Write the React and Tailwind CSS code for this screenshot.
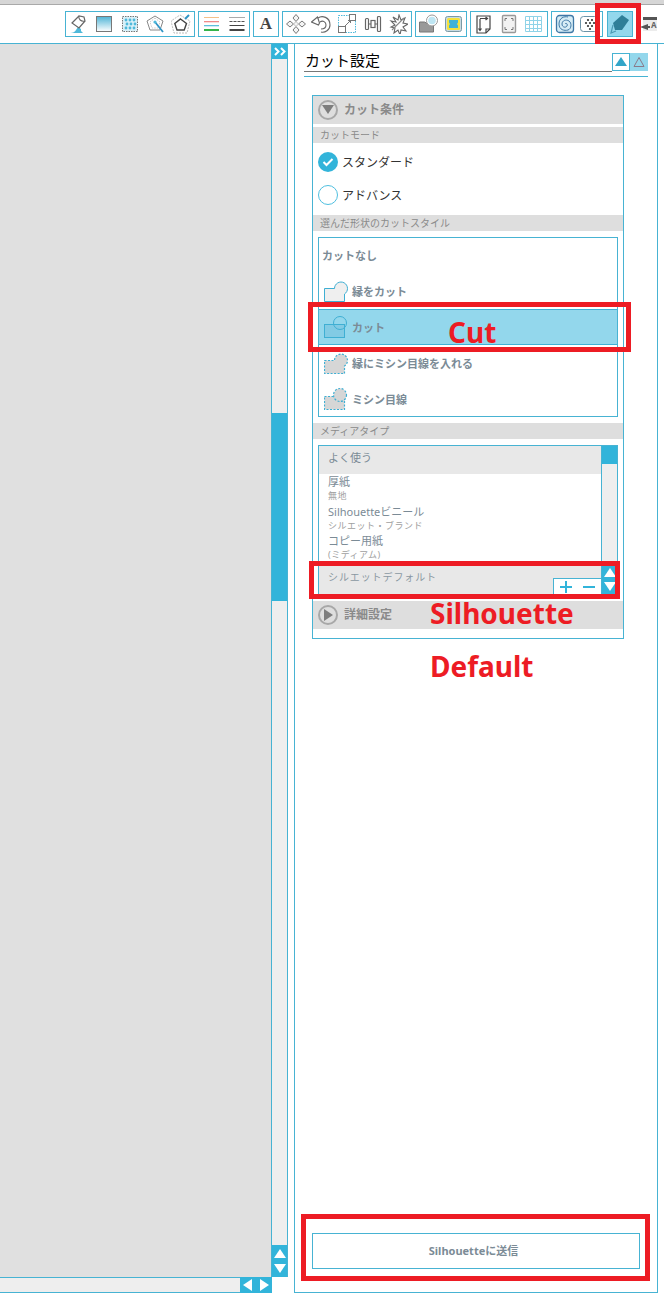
import React from 'react';

const jp = 'font-["Noto_Sans","Noto_Sans_CJK_JP",sans-serif]';

// toolbar icons, all on a 20x20 box
const PourIcon = () => (
  <svg width="20" height="20" viewBox="0 0 20 20" fill="none">
    <path d="M1 19c3 0 5-1 6-3l2-3 3 2v2l2 2z" fill="#4fb9da" />
    <path d="M3 9l7-7 5 1 1 4-6 7z" fill="#fff" stroke="#666" strokeWidth="1.200" />
    <path d="M10 2c-1 3 2 6 6 5" stroke="#666" strokeWidth="1.100" />
  </svg>
);
const GradientIcon = () => (
  <svg width="20" height="20" viewBox="0 0 20 20">
    <defs>
      <linearGradient id="grad1" x1="0" y1="0" x2="0" y2="1">
        <stop offset="0" stopColor="#4fb4d6" />
        <stop offset="1" stopColor="#fff" />
      </linearGradient>
    </defs>
    <rect x="2.500" y="2.500" width="15" height="15" fill="url(#grad1)" stroke="#777" />
  </svg>
);
const DotsFillIcon = () => (
  <svg width="20" height="20" viewBox="0 0 20 20">
    <rect x="2.500" y="2.500" width="15" height="15" fill="#d8f0f8" stroke="#777" strokeDasharray="1.500 1" />
    {[6, 10, 14].map((y, r) =>
      [6, 10, 14].map((x) => <circle key={`${x}-${y}`} cx={x + (r % 2)} cy={y} r="1.400" fill="#4fb9da" />)
    )}
  </svg>
);
const PentaWandIcon = () => (
  <svg width="20" height="20" viewBox="0 0 20 20" fill="none">
    <path d="M9 2l8 5-3 9H4L1 7z" stroke="#888" />
    <path d="M9 4l5 4-2 6H6L4 8z" stroke="#ccc" strokeDasharray="1.500 1" />
    <path d="M9 8l8 10" stroke="#2f93c4" strokeWidth="1.800" />
    <circle cx="9" cy="8" r="1.600" fill="#4fb9da" />
  </svg>
);
const PentaPenIcon = () => (
  <svg width="20" height="20" viewBox="0 0 20 20" fill="none">
    <path d="M9 1l10 6-3 12H3L0 7z" stroke="#bbb" strokeDasharray="2 1" />
    <path d="M9.500 5l6 4.500-2.300 6.500H6L3.800 9.500z" stroke="#444" strokeWidth="1.400" />
    <path d="M14 5l4-4" stroke="#2f93c4" strokeWidth="2" />
  </svg>
);
const ColorLinesIcon = () => (
  <svg width="20" height="20" viewBox="0 0 20 20">
    <rect x="2" y="3" width="15" height="1" fill="#f5c08a" />
    <rect x="2" y="7" width="15" height="1.300" fill="#f08a8a" />
    <rect x="2" y="11" width="15" height="1.300" fill="#5fc0dc" />
    <rect x="2" y="15" width="15" height="2" fill="#35b44a" />
  </svg>
);
const DashLinesIcon = () => (
  <svg width="20" height="20" viewBox="0 0 20 20">
    <path d="M2.500 3.500h15" stroke="#555" strokeDasharray="1 1" />
    <path d="M2.500 7.500h15" stroke="#555" strokeDasharray="3 1" />
    <rect x="2.500" y="11" width="15" height="1" fill="#444" />
    <rect x="2.500" y="15" width="15" height="2" fill="#444" />
  </svg>
);
const MoveIcon = () => (
  <svg width="20" height="20" viewBox="0 0 20 20" fill="#f4f4f4" stroke="#777">
    <path d="M10 0.500l3 3.500-3 3.500-3-3.500zM10 12.500l3 3.500-3 3.500-3-3.500zM0.500 10l3.500-3 3.500 3-3.500 3zM12.500 10l3.500-3 3.500 3-3.500 3z" />
    <path d="M10 7.500l2.500 2.500-2.500 2.500-2.500-2.500z" stroke="#bbb" />
  </svg>
);
const RotateIcon = () => (
  <svg width="20" height="20" viewBox="0 0 20 20" fill="none" stroke="#666" strokeWidth="1.100">
    <path d="M7 4c4-3 12-1 12 7 0 5-5 8-9 7" />
    <path d="M9 8c3-2 6 0 6 3s-3 4-5 4" />
    <path d="M0.500 8l6-5 2 6-1 2z" fill="#fff" />
  </svg>
);
const ScaleIcon = () => (
  <svg width="20" height="20" viewBox="0 0 20 20" fill="#fff">
    <rect x="1.500" y="1.500" width="17" height="17" fill="none" stroke="#4fb9da" strokeDasharray="1.500 1" />
    <rect x="12.500" y="0.500" width="6" height="6" stroke="#777" />
    <rect x="1.500" y="12.500" width="7" height="6" stroke="#777" />
    <path d="M8 12l5-5M11 6.500h2.500V9" fill="none" stroke="#777" />
  </svg>
);
const AlignIcon = () => (
  <svg width="20" height="20" viewBox="0 0 20 20" fill="none" stroke="#666" strokeWidth="1.200">
    <rect x="2.500" y="4.500" width="3" height="11" rx="1" />
    <rect x="14.500" y="2.500" width="3" height="15" rx="1" />
    <rect x="8" y="6.500" width="4" height="7" />
    <path d="M5.500 10H8M12 10h2.500" />
  </svg>
);
const BurstIcon = () => (
  <svg width="20" height="20" viewBox="0 0 20 20" fill="none" stroke="#666" strokeWidth="1.100">
    <path d="M3 7l5 1-3-5 5 3 1-5 2 5 4-2-2 5 5 1-5 3 3 4-5-1-1 5-2-5-4 3 1-5-4-1 4-2z" />
    <path d="M4 16L16 4" stroke="#888" />
  </svg>
);
const FolderCircleIcon = () => (
  <svg width="20" height="20" viewBox="0 0 20 20">
    <path d="M0.500 8h5l2 1h7v9h-14z" fill="#999" stroke="#777" />
    <circle cx="13" cy="6.500" r="5.500" fill="#fff" stroke="#999" />
    <circle cx="13" cy="6.500" r="3.800" fill="#bfe6f3" />
  </svg>
);
const SwatchIcon = () => (
  <svg width="20" height="20" viewBox="0 0 20 20">
    <rect x="1.500" y="2.500" width="16" height="15" rx="2" fill="#c8dbe2" stroke="#7b9aa6" />
    <rect x="3" y="4" width="13" height="12" rx="1.500" fill="#f5e23c" />
    <path d="M5 6h9v2.500l-1 1.500 1 1.500V14H5v-2.500L6 10 5 8.500z" fill="#3fb2d6" />
  </svg>
);
const PageIcon = () => (
  <svg width="20" height="20" viewBox="0 0 20 20" fill="none" stroke="#444" strokeWidth="1.200">
    <path d="M3 2h13v13l-4 4H3z" />
    <path d="M12 19v-4h4" />
    <path d="M6 4.500h7M11.500 3l2 1.500-2 1.500M6 5v11M4.500 14.500L6 16.500l1.500-2" />
  </svg>
);
const CropIcon = () => (
  <svg width="20" height="20" viewBox="0 0 20 20" fill="none">
    <rect x="3.500" y="1.500" width="13" height="17" rx="1" fill="#f2f2f2" stroke="#999" strokeWidth="1.400" />
    <path d="M6 7V4.500h2M14 7V4.500h-2M6 13v2.500h2M14 13v2.500h-2" stroke="#777" />
  </svg>
);
const GridIcon = () => (
  <svg width="20" height="20" viewBox="0 0 20 20" fill="none" stroke="#8fd3e8">
    <path d="M1.500 2.500h16v15h-16zM1.500 6.500h16M1.500 10.500h16M1.500 14.500h16M5.500 2.500v15M9.500 2.500v15M13.500 2.500v15" />
  </svg>
);
const SpiralIcon = () => (
  <svg width="20" height="20" viewBox="0 0 20 20" fill="none">
    <rect x="1.500" y="1.500" width="17" height="17" rx="3" fill="#d6edf6" stroke="#3f78a6" strokeWidth="1.300" />
    <path d="M10 10c1-1.500 3 0 2 2s-5 1.500-5-2 4-5 7-3 2.500 8-1 9-9 0-9-6 5-8 9-7" stroke="#3f78a6" />
  </svg>
);
const DotsIcon = () => (
  <svg width="20" height="20" viewBox="0 0 20 20">
    <rect x="0.500" y="2.500" width="17" height="15" rx="3" fill="#fff" stroke="#6b93a8" />
    {[[8, 6], [12, 6], [6, 9], [10, 9], [14, 9], [8, 12], [12, 12], [10, 15]].map(([x, y]) => (
      <circle key={`${x}-${y}`} cx={x} cy={y} r="1.100" fill="#333" />
    ))}
  </svg>
);
const MarkerIcon = () => (
  <svg width="22" height="20" viewBox="0 0 22 20">
    <path d="M4 9l9-8 7 5-7 10H6z" fill="#2f7f98" />
    <path d="M4 11l-2 8 5-2" fill="none" stroke="#4d9bb4" strokeWidth="1.200" />
  </svg>
);
const LastIcon = () => (
  <svg width="18" height="16" viewBox="0 0 18 16">
    <path d="M3 1h14v3H3z" fill="#555" />
    <rect x="3" y="4" width="14" height="11" fill="#ececec" />
    <path d="M0 11l8-3v2h2v2H8v2z" fill="#555" />
    <text x="11" y="12" fontSize="8" fontWeight="700" fill="#666">A</text>
  </svg>
);

const toolbarGroups = [
  { width: 'w-[130px]', icons: [PourIcon, GradientIcon, DotsFillIcon, PentaWandIcon, PentaPenIcon] },
  { width: 'w-[52px]', icons: [ColorLinesIcon, DashLinesIcon] },
  { width: 'w-[26px]', icons: ['A'] },
  { width: 'w-[130px]', icons: [MoveIcon, RotateIcon, ScaleIcon, AlignIcon, BurstIcon] },
  { width: 'w-[52px]', icons: [FolderCircleIcon, SwatchIcon] },
  { width: 'w-[78px]', icons: [PageIcon, CropIcon, GridIcon] },
  { width: 'w-[52px]', icons: [SpiralIcon, DotsIcon] },
];

const Triangle = ({ dir, className }) => {
  const d = { up: 'M6 1l6 9H0z', down: 'M6 10L0 1h12z', left: 'M1 6l9-6v12z', right: 'M11 6l-9 6V0z' }[dir];
  return (
    <svg width="12" height="12" viewBox="0 0 12 12" className={className}>
      <path d={d} fill="currentColor" />
    </svg>
  );
};

const SubHeader = ({ children }) => (
  <div className="h-4 bg-[#dedede] pl-[7px] text-[10px] leading-4 text-[#8a8a8a]">{children}</div>
);

const SectionHeader = ({ title, dir }) => (
  <div className="h-7 bg-[#dedede] flex items-center pl-[5px] gap-[6px]">
    <div className="w-[20px] h-[20px] rounded-full border-2 border-[#a8a8a8] flex items-center justify-center text-[#7d7d7d]">
      <Triangle dir={dir} />
    </div>
    <span className="text-xs font-bold text-[#8a8a8a]">{title}</span>
  </div>
);

const ShapeIcon = ({ variant }) => {
  const cyan = '#3fafd3';
  return (
    <svg width="26" height="24" viewBox="0 0 26 24" fill="none">
      {variant === 'cut' && (
        <>
          <rect x="0.500" y="9.500" width="20" height="13" fill="#82cbe4" stroke={cyan} />
          <circle cx="16" cy="8" r="6.500" stroke={cyan} />
        </>
      )}
      {variant === 'dashBoth' && (
        <>
          <rect x="0.500" y="9.500" width="20" height="13" fill="#d6d6d6" stroke={cyan} strokeWidth="1.200" strokeDasharray="2 1.500" />
          <circle cx="16" cy="8" r="6.500" fill="#d6d6d6" stroke={cyan} strokeWidth="1.200" strokeDasharray="2 1.500" />
        </>
      )}
      {(variant === 'plain' || variant === 'dash') && (
        <path
          d="M0.500 9.500h10a6.500 6.500 0 1 1 10 5.500V22.500h-20z"
          fill={variant === 'dash' ? '#d6d6d6' : '#efefef'}
          stroke={cyan}
          strokeWidth={variant === 'dash' ? 1.200 : 1}
          strokeDasharray={variant === 'dash' ? '2 1.500' : undefined}
        />
      )}
    </svg>
  );
};

const CutRow = ({ label, variant, active }) => (
  <div className={`h-9 shrink-0 flex items-center pl-[5px] gap-[2px] ${active ? 'bg-[#93d7ec] border-y border-[#3fb1d6]' : ''}`}>
    <ShapeIcon variant={variant} />
    <span className="mt-[2px] text-[11px] font-bold text-[#7b8b96]">{label}</span>
  </div>
);

const MediaItem = ({ name, sub }) => (
  <div className="h-[29.5px] pl-[9px]">
    <div className="text-[11px] leading-[15px] text-[#7b8b96]">{name}</div>
    <div className="text-[9px] leading-[14px] text-[#a0a0a0] tracking-[0.5px]">{sub}</div>
  </div>
);

const RedLabel = ({ className, children }) => (
  <div className={`absolute text-[#ed1c24] text-[28px] leading-none font-bold ${className}`}>{children}</div>
);

const App = () => {
  return (
    <div className={`relative w-[664px] h-[1294px] overflow-hidden bg-white flex flex-col ${jp}`}>
      {/* top strip */}
      <div className="h-[5px] shrink-0 bg-[#d6d6d6] border-b border-[#a9a9a9]" />

      {/* toolbar */}
      <div className="h-[39px] shrink-0 flex gap-[3px] pl-[65px] pt-[6px] border-b border-[#47b3d3]">
        {toolbarGroups.map((group, i) => (
          <div key={i} className={`${group.width} h-[26px] flex border border-[#47b3d3]`}>
            {group.icons.map((Icon, j) => (
              <div key={j} className="flex-1 flex items-center justify-center">
                {Icon === 'A' ? (
                  <span className='font-["Liberation_Serif",serif] font-bold text-[17px] text-[#444]'>A</span>
                ) : (
                  <Icon />
                )}
              </div>
            ))}
          </div>
        ))}
        <div className="ml-[1px] w-[26px] h-[26px] bg-[#93d7ec] border border-[#47b3d3] flex items-center justify-center">
          <MarkerIcon />
        </div>
        <div className="ml-[4px] w-[20px] h-[26px] flex items-center">
          <LastIcon />
        </div>
      </div>

      <div className="flex-1 flex min-h-0">
        {/* canvas side */}
        <div className="w-[288px] shrink-0 flex flex-col h-[1249px]">
          <div className="flex-1 flex min-h-0">
            <div className="flex-1 bg-[#e0e0e0]" />
            <div className="w-[17px] flex flex-col bg-[#eeeeee] border-x border-[#47b3d3]">
              <div className="h-[15px] bg-[#32b4da] flex items-center justify-center">
                <svg width="12" height="9" viewBox="0 0 12 9" fill="none" stroke="#fff" strokeWidth="2">
                  <path d="M1 1l3.500 3.500L1 8M7 1l3.500 3.500L7 8" />
                </svg>
              </div>
              <div className="h-[354px]" />
              <div className="h-[188px] bg-[#32b4da]" />
              <div className="flex-1" />
              <div className="h-8 bg-[#32b4da] flex flex-col items-center justify-center gap-[3px] text-white">
                <Triangle dir="up" />
                <Triangle dir="down" />
              </div>
            </div>
          </div>
          <div className="h-4 flex">
            <div className="w-[240px] bg-[#eeeeee] border-y border-[#47b3d3]" />
            <div className="w-8 bg-[#32b4da] flex items-center justify-center gap-1 text-white">
              <Triangle dir="left" />
              <Triangle dir="right" />
            </div>
          </div>
        </div>

        {/* settings panel */}
        <div className="ml-[6px] w-[364px] h-[1249px] border border-t-0 border-[#47b3d3] flex flex-col">
          <div className="ml-[9px] mr-[9px] mt-[9px] h-[24px] border-b border-[#47b3d3] flex flex-col">
            <div className="flex h-[19px]">
              <div className="flex-1 border-b border-[#777] pl-[1px] text-[15px] leading-[15px] text-black">カット設定</div>
              <div className="w-[18px] h-[18px] border border-[#47b3d3] flex items-center justify-center text-[#32a5c8]">
                <Triangle dir="up" />
              </div>
              <div className="w-[18px] h-[18px] bg-[#93d7ec] flex items-center justify-center text-[#8a7a8a]">
                <svg width="12" height="12" viewBox="0 0 12 12" fill="none">
                  <path d="M6 1.500L11 10.500H1z" stroke="currentColor" />
                </svg>
              </div>
            </div>
          </div>

          {/* cut conditions card */}
          <div className="ml-[17px] mt-[18px] w-[312px] h-[544px] border border-[#47b3d3] flex flex-col">
            <SectionHeader title="カット条件" dir="down" />
            <div className="mt-[3px]">
              <SubHeader>カットモード</SubHeader>
            </div>
            <div className="h-[72px] flex flex-col pl-[5px] pt-[9px] gap-[13px]">
              <div className="flex items-center gap-[4px] h-5">
                <div className="w-5 h-5 rounded-full bg-[#32b4da] flex items-center justify-center">
                  <svg width="12" height="10" viewBox="0 0 12 10" fill="none">
                    <path d="M1.500 5l3 3 6-6" stroke="#fff" strokeWidth="2" />
                  </svg>
                </div>
                <span className="mt-[2px] text-xs text-[#333]">スタンダード</span>
              </div>
              <div className="flex items-center gap-[4px] h-5">
                <div className="w-5 h-5 rounded-full border border-[#4fbfe0] bg-white" />
                <span className="mt-[2px] text-xs text-[#333]">アドバンス</span>
              </div>
            </div>
            <SubHeader>選んだ形状のカットスタイル</SubHeader>

            <div className="mx-[5px] mt-[6px] h-[180px] border border-[#47b3d3] flex flex-col">
              <div className="h-[35px] shrink-0 flex items-center pl-[3px] pt-[2px] text-[11px] font-bold text-[#7b8b96]">カットなし</div>
              <CutRow label="縁をカット" variant="plain" />
              <CutRow label="カット" variant="cut" active />
              <CutRow label="縁にミシン目線を入れる" variant="dash" />
              <CutRow label="ミシン目線" variant="dashBoth" />
            </div>

            <div className="mt-[6px]">
              <SubHeader>メディアタイプ</SubHeader>
            </div>

            {/* media list */}
            <div className="relative mx-[5px] mt-[6px] h-[150px] border border-[#47b3d3] flex">
              <div className="flex-1 border-r border-[#47b3d3] flex flex-col min-w-0">
                <div className="h-[29px] bg-[#e8e8e8] pl-[9px] text-[11px] leading-[23px] text-[#7b8b96]">よく使う</div>
                <div className="flex-1">
                  <MediaItem name="厚紙" sub="無地" />
                  <MediaItem name="Silhouetteビニール" sub="シルエット・ブランド" />
                  <MediaItem name="コピー用紙" sub="(ミディアム)" />
                </div>
                <div className="h-[32px] bg-[#e8e8e8] pl-[9px] text-[10px] leading-[28px] text-[#8a98a2] tracking-[0.9px]">シルエットデフォルト</div>
              </div>
              <div className="w-[15px] bg-[#eeeeee] flex flex-col">
                <div className="h-[18px] bg-[#32b4da]" />
                <div className="flex-1" />
                <div className="h-[28px] bg-[#32b4da] flex flex-col items-center justify-center gap-[2px] text-white">
                  <Triangle dir="up" />
                  <Triangle dir="down" />
                </div>
              </div>
              <div className="absolute left-[234px] bottom-0 w-[49px] h-[16px] bg-white border border-[#47b3d3] border-b-0 flex items-center justify-around text-[#32b4da]">
                <svg width="12" height="12" viewBox="0 0 12 12"><path d="M6 0v12M0 6h12" stroke="currentColor" strokeWidth="2" /></svg>
                <svg width="12" height="12" viewBox="0 0 12 12"><path d="M0 6h12" stroke="currentColor" strokeWidth="2" /></svg>
              </div>
            </div>

            <div className="mt-[6px]">
              <SectionHeader title="詳細設定" dir="right" />
            </div>
          </div>

          <div className="flex-1" />
          <div className="mx-[17px] mb-[23px] h-[36px] w-[328px] pr-[5px] border border-[#47b3d3] flex items-center justify-center text-[11px] font-bold text-[#7b8b96]">
            Silhouetteに送信
          </div>
        </div>
      </div>

      {/* red annotations */}
      <div className="absolute left-[595px] top-[3px] w-[46px] h-[41px] border-[5px] border-[#ed1c24]" />
      <div className="absolute left-[308px] top-[302px] w-[323px] h-[50px] border-[5px] border-[#ed1c24]" />
      <div className="absolute left-[309px] top-[561px] w-[311px] h-[38px] border-[5px] border-[#ed1c24]" />
      <div className="absolute left-[301px] top-[1214px] w-[349px] h-[67px] border-[5px] border-[#ed1c24]" />
      <RedLabel className="left-[448px] top-[318px]">Cut</RedLabel>
      <RedLabel className="left-[430px] top-[599px]">Silhouette</RedLabel>
      <RedLabel className="left-[430px] top-[652px]">Default</RedLabel>
    </div>
  );
};

export default App;
